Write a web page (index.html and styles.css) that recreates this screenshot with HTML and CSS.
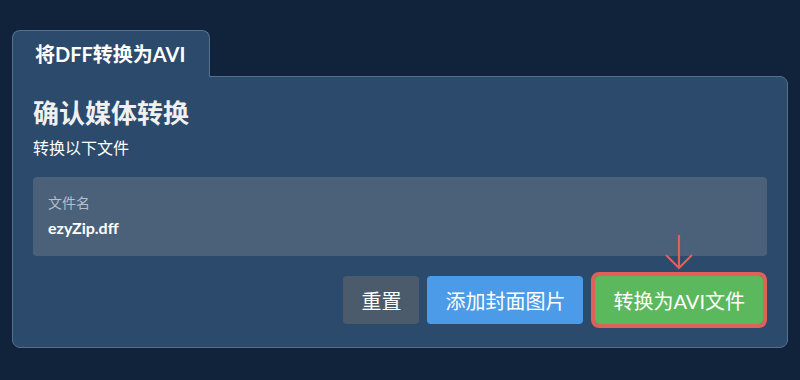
FILE: index.html
```html
<!DOCTYPE html>
<html lang="zh-CN">
<head>
    <meta charset="UTF-8">
    <meta name="viewport" content="width=device-width, initial-scale=1.0">
    <title>将DFF转换为AVI</title>
    <link rel="stylesheet" href="styles.css">
</head>
<body>
    <div class="converter">
        <div class="tab">将DFF转换为AVI</div>
        <div class="panel">
            <h1>确认媒体转换</h1>
            <p class="subtitle">转换以下文件</p>
            <div class="file-box">
                <div class="file-label">文件名</div>
                <div class="file-name">ezyZip.dff</div>
            </div>
            <div class="actions">
                <button class="btn btn-reset">重置</button>
                <button class="btn btn-cover">添加封面图片</button>
                <div class="convert-wrap">
                    <svg class="arrow" width="30" height="36" viewBox="0 0 30 36">
                        <path d="M15 1 V34 M2 21 L15 34 L28 21" fill="none" stroke="#e0605a" stroke-width="2.2"/>
                    </svg>
                    <button class="btn btn-convert">转换为AVI文件</button>
                </div>
            </div>
        </div>
    </div>
</body>
</html>
```

FILE: styles.css
```css
body {
    margin: 0;
    padding: 30px 12px 0;
    background: #11233a;
    font-family: Lato, "Noto Sans CJK SC", sans-serif;
    color: #ffffff;
}
.converter {
    width: 776px;
}
.tab {
    display: inline-block;
    height: 46px;
    line-height: 46px;
    padding: 0 24px 0 22px;
    background: #2c4a6b;
    border: 1px solid #52708f;
    border-bottom: none;
    border-radius: 8px 8px 0 0;
    font-size: 20px;
    font-weight: bold;
    position: relative;
    z-index: 1;
    margin-bottom: -1px;
}
.panel {
    background: #2c4a6b;
    border: 1px solid #52708f;
    border-radius: 0 8px 8px 8px;
    padding: 18px 20px 23px;
}
h1 {
    margin: 0;
    font-size: 26px;
    line-height: 36px;
    font-weight: bold;
    color: #f0f0f0;
}
.subtitle {
    margin: 6px 0 18px;
    font-size: 16px;
    line-height: 22px;
}
.file-box {
    background: #4b6179;
    border-radius: 4px;
    padding: 16px 15px 18px;
}
.file-label {
    font-size: 14px;
    line-height: 20px;
    color: #b3bfcc;
}
.file-name {
    margin-top: 5px;
    font-size: 16px;
    line-height: 20px;
    font-weight: bold;
}
.actions {
    display: flex;
    justify-content: flex-end;
    align-items: flex-end;
    gap: 8px;
    margin-top: 20px;
    padding-right: 4px;
}
.btn {
    height: 48px;
    padding: 0 18px;
    border: none;
    border-radius: 4px;
    font-family: Lato, "Noto Sans CJK SC", sans-serif;
    font-size: 20px;
    color: #ffffff;
    cursor: pointer;
}
.btn-reset {
    background: #4b5b6c;
}
.btn-cover {
    background: #4c9be8;
}
.convert-wrap {
    position: relative;
    margin-left: 4px;
}
.arrow {
    position: absolute;
    left: 69px;
    top: -42px;
}
.btn-convert {
    background: #5cb85c;
    outline: 4px solid #e0605a;
    display: block;
}
```
